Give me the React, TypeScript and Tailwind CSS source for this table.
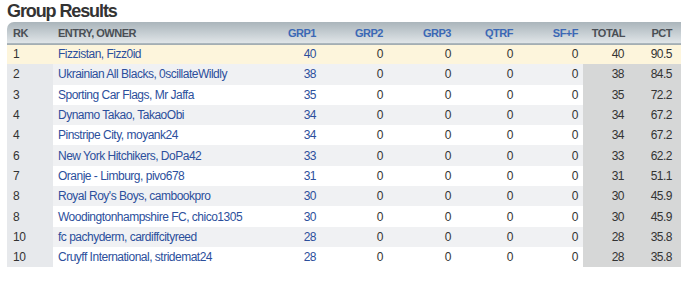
import * as React from "react";

const rows = [
  { rk: 1, entry: "Fizzistan, Fizz0id", grp1: 40, total: 40, pct: "90.5" },
  { rk: 2, entry: "Ukrainian All Blacks, 0scillateWildly", grp1: 38, total: 38, pct: "84.5" },
  { rk: 3, entry: "Sporting Car Flags, Mr Jaffa", grp1: 35, total: 35, pct: "72.2" },
  { rk: 4, entry: "Dynamo Takao, TakaoObi", grp1: 34, total: 34, pct: "67.2" },
  { rk: 4, entry: "Pinstripe City, moyank24", grp1: 34, total: 34, pct: "67.2" },
  { rk: 6, entry: "New York Hitchikers, DoPa42", grp1: 33, total: 33, pct: "62.2" },
  { rk: 7, entry: "Oranje - Limburg, pivo678", grp1: 31, total: 31, pct: "51.1" },
  { rk: 8, entry: "Royal Roy's Boys, cambookpro", grp1: 30, total: 30, pct: "45.9" },
  { rk: 8, entry: "Woodingtonhampshire FC, chico1305", grp1: 30, total: 30, pct: "45.9" },
  { rk: 10, entry: "fc pachyderm, cardiffcityreed", grp1: 28, total: 28, pct: "35.8" },
  { rk: 10, entry: "Cruyff International, stridemat24", grp1: 28, total: 28, pct: "35.8" },
];

export default function App() {
  return (
    <div className="w-[681px] h-[283px] overflow-hidden bg-white font-['Liberation_Sans',Arial,sans-serif] text-[12px] tracking-[-0.5px] text-[#333]">
      <h1 className="pl-[7px] pt-[1px] h-[22px] text-[18px] leading-[20px] font-bold tracking-[-1.1px] text-[#333]">
        Group Results
      </h1>
      <table className="ml-[7px] w-[674px] table-fixed border-collapse">
        <colgroup>
          <col className="w-[46px]" />
          <col className="w-[201px]" />
          <col className="w-[67px]" />
          <col className="w-[67px]" />
          <col className="w-[68px]" />
          <col className="w-[64px]" />
          <col className="w-[63px]" />
          <col className="w-[47px]" />
          <col className="w-[51px]" />
        </colgroup>
        <thead>
          <tr className="h-[22px] bg-gradient-to-b from-[#aab5bb] to-[#e0e5e8] border-b border-[#a4aeb3] text-[11px] font-bold">
            <th className="rounded-tl-[7px] text-left pl-[6px] pt-[1px] text-[#4a4f55]">RK</th>
            <th className="text-left pl-[5px] pt-[1px] text-[#4a4f55]">ENTRY, OWNER</th>
            <th className="text-right pr-[5px] pt-[1px] text-[#3b68b5]">GRP1</th>
            <th className="text-right pr-[5px] pt-[1px] text-[#3b68b5]">GRP2</th>
            <th className="text-right pr-[5px] pt-[1px] text-[#3b68b5]">GRP3</th>
            <th className="text-right pr-[7px] pt-[1px] text-[#3b68b5]">QTRF</th>
            <th className="text-right pr-[5px] pt-[1px] text-[#3b68b5]">SF+F</th>
            <th className="text-right pr-[5px] pt-[1px] text-[#4a4f55]">TOTAL</th>
            <th className="text-right pr-[9px] pt-[1px] text-[#4a4f55]">PCT</th>
          </tr>
        </thead>
        <tbody>
          {rows.map((r, i) => {
            const first = i === 0;
            const rowBg = first ? "bg-[#fdf5dc]" : i % 2 === 1 ? "bg-[#f0f1f3]" : "bg-white";
            const rkBg = first ? "" : "bg-[#e7e9ec]";
            const sumBg = first ? "" : "bg-[#d6d7d7]";
            return (
              <tr key={i} className={`h-[20.3px] ${rowBg}`}>
                <td className={`pl-[6px] ${rkBg}`}>{r.rk}</td>
                <td className="pl-[5px] whitespace-nowrap overflow-hidden">
                  <a href="#" className="text-[#2c4f9c]">{r.entry}</a>
                </td>
                <td className="text-right pr-[5px] text-[#2c4f9c]">{r.grp1}</td>
                <td className="text-right pr-[5px]">0</td>
                <td className="text-right pr-[5px]">0</td>
                <td className="text-right pr-[7px]">0</td>
                <td className="text-right pr-[5px]">0</td>
                <td className={`text-right pr-[6px] ${sumBg}`}>{r.total}</td>
                <td className={`text-right pr-[9px] ${sumBg}`}>{r.pct}</td>
              </tr>
            );
          })}
        </tbody>
      </table>
    </div>
  );
}
